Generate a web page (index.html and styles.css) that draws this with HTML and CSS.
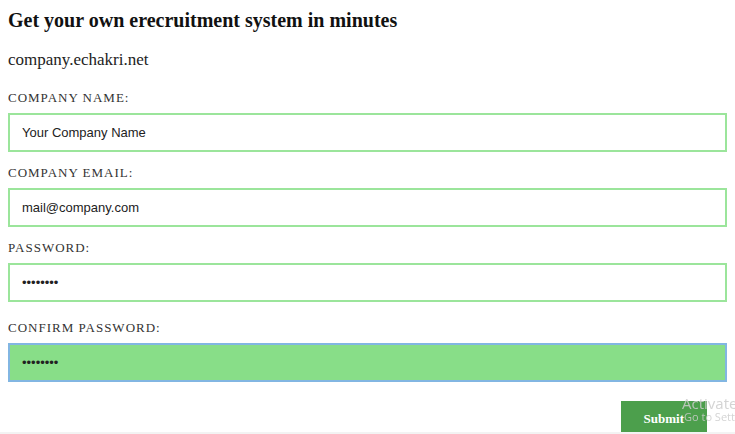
FILE: index.html
```html
<!DOCTYPE html>
<html>
<head>
    <meta charset="UTF-8">
    <meta name="viewport" content="width=device-width, initial-scale=1.0">
    <title>eChakri - Company signup</title>
    <link rel="stylesheet" href="styles.css">
</head>
<body>
    <h3 class="title">Get your own erecruitment system in minutes</h3>
    <p class="domain">company.echakri.net</p>

    <form class="signup">
        <div class="field">
            <label for="companyName">COMPANY NAME:</label>
            <input type="text" id="companyName" value="Your Company Name">
        </div>
        <div class="field">
            <label for="companyEmail">COMPANY EMAIL:</label>
            <input type="email" id="companyEmail" value="mail@company.com">
        </div>
        <div class="field">
            <label for="password">PASSWORD:</label>
            <input type="password" id="password" value="12345678">
        </div>
        <div class="field field-confirm">
            <label for="confirmPassword">CONFIRM PASSWORD:</label>
            <input type="password" id="confirmPassword" class="filled" value="12345678">
        </div>
        <div class="actions">
            <button type="button" class="btn-submit">Submit</button>
        </div>
    </form>

    <!-- водяной знак поверх страницы -->
    <div class="watermark">
        <div class="wm-big">Activate Windows</div>
        <div class="wm-small">Go to Settings to activate Windows.</div>
    </div>
    <div class="bottom-edge"></div>
</body>
</html>
```

FILE: styles.css
```css
body {
    margin: 8px;
    background: #fff;
    color: #222;
    font-family: "Liberation Serif", "Times New Roman", serif;
    overflow: hidden;
}

.title {
    margin: 1px 0 0;
    font-size: 20px;
    font-weight: bold;
    color: #111;
}

.domain {
    margin: 18px 0 0;
    font-size: 17px;
    color: #222;
}

.signup {
    margin-top: 20px;
}

.field {
    margin-bottom: 13px;
}

/* последний блок чуть ниже остальных */
.field-confirm {
    margin-top: 18px;
    margin-bottom: 0;
}

.field label {
    display: block;
    font-size: 13px;
    line-height: 15px;
    letter-spacing: 1px;
    color: #333;
    margin-bottom: 8px;
}

.field input {
    display: block;
    box-sizing: border-box;
    width: 100%;
    height: 39px;
    margin: 0;
    padding: 0 12px;
    border: 2px solid #9be59b;
    background: #fff;
    font-family: "Liberation Sans", Arial, sans-serif;
    font-size: 13px;
    color: #222;
    outline: none;
}

.field input.filled {
    background: #88de88;
    border-color: #82b6e2;
}

.actions {
    display: flex;
    justify-content: flex-end;
    padding: 19px 20px 0 0;
}

.btn-submit {
    background: #4c9f4c;
    color: #fff;
    border: none;
    padding: 10px 23px;
    font-family: "Liberation Serif", "Times New Roman", serif;
    font-size: 13px;
    font-weight: bold;
    line-height: 15px;
    cursor: pointer;
}

.watermark {
    position: fixed;
    left: 682px;
    top: 394px;
    white-space: nowrap;
    font-family: "Open Sans", "Noto Sans", sans-serif;
    color: rgba(205, 205, 205, 0.85);
}

.wm-big {
    font-size: 15px;
    line-height: 18px;
}

.wm-small {
    font-size: 11px;
    line-height: 13px;
    margin: -2px 0 0 2px;
}

.bottom-edge {
    position: fixed;
    left: 0;
    right: 0;
    bottom: 0;
    height: 2px;
    background: #f3f3f3;
}
```
